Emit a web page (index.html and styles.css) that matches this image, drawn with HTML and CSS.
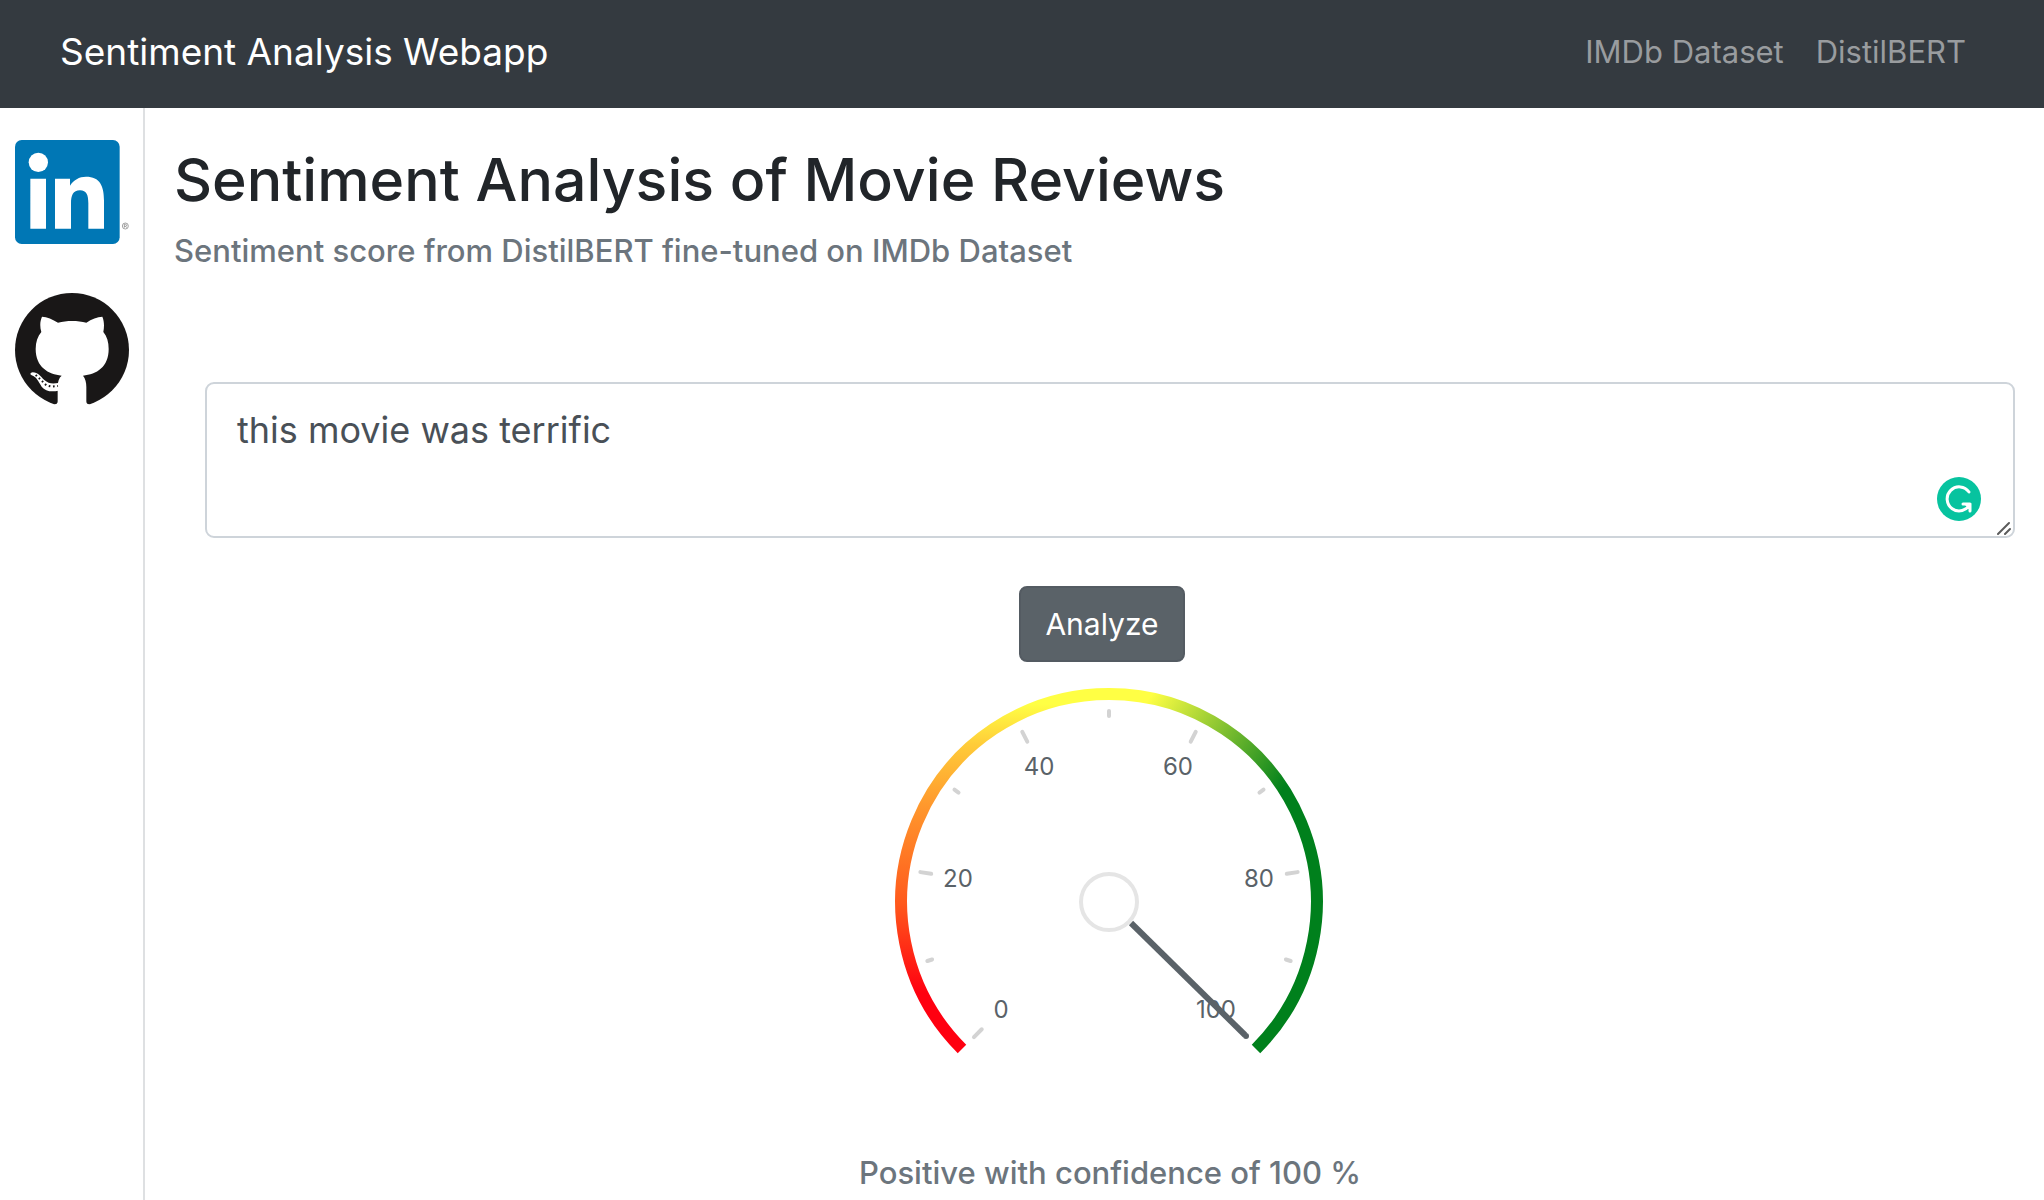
FILE: index.html
```html
<!DOCTYPE html>
<html lang="en">
<head>
<meta charset="utf-8">
<meta name="viewport" content="width=device-width, initial-scale=1">
<title>Sentiment Analysis Webapp</title>
<link rel="stylesheet" href="styles.css">
</head>
<body>
<header class="navbar">
  <a class="brand" href="#">Sentiment Analysis Webapp</a>
  <nav class="nav-links">
    <a class="nav-link" href="#imdb">IMDb Dataset</a>
    <a class="nav-link" href="#distilbert">DistilBERT</a>
  </nav>
</header>
<div class="layout">
  <aside class="sidebar">
    <a class="social" href="#linkedin" aria-label="LinkedIn">
      <svg class="social-icon" viewBox="45 60 342 312">
        <rect x="45" y="60" width="314" height="312" rx="20" fill="#0077b5"/>
        <circle cx="115" cy="127" r="29" fill="#fff"/>
        <path d="M91 176h47v150H91zM165 176H210V197C220 180 238 170 258 170C300 170 312 198 312 242V326H265V250C265 226 260 211 240 211C219 211 213 227 213 250V326H165Z" fill="#fff"/>
        <circle cx="376" cy="318" r="9" fill="none" stroke="#777" stroke-width="2"/>
        <path d="M373 323v-10h4q3 1 3 3t-3 3h-4m4 0l3 4" fill="none" stroke="#777" stroke-width="2"/>
      </svg>
    </a>
    <a class="social" href="#github" aria-label="GitHub">
      <svg class="social-icon" viewBox="45 518 342 342">
        <circle cx="216" cy="689" r="171" fill="#191717"/>
        <path d="M163 865V852Q173 853 173 843V800C173 784 177 772 185 766C145 762 107 740 107 686C107 665 113 648 124 635C119 618 120 602 126 589C141 589 158 597 174 607C200 600 233 600 259 607C275 596 292 589 307 589C313 602 313 620 310 635C321 648 326 665 326 686C326 740 290 762 249 766C256 775 259 785 259 800V843Q259 853 269 852V865Z" fill="#fff"/>
        <path d="M175 811C154 816 135 812 125 799C114 782 110 770 95 765C89 762 91 757 98 756C114 756 122 769 133 779C145 790 157 791 175 788Z" fill="#fff"/>
        <path d="M107 764L123 779L139 795L155 799L174 797" fill="none" stroke="#191717" stroke-width="6" stroke-dasharray="5 8"/>
      </svg>
    </a>
  </aside>
  <main class="content">
    <h1 class="title">Sentiment Analysis of Movie Reviews</h1>
    <h2 class="caption">Sentiment score from DistilBERT fine-tuned on IMDb Dataset</h2>
    <form class="review" onsubmit="return false">
      <div class="field">
        <textarea class="review-text" aria-label="Movie review" spellcheck="false">this movie was terrific</textarea>
        <svg class="grammar-badge" viewBox="0 0 44 44" aria-hidden="true">
          <circle cx="22" cy="22" r="22" fill="#07c39f"/>
          <path d="M32 15A12 12 0 1 0 33 27M33 27H26M33 27V34" fill="none" stroke="#fff" stroke-width="3" stroke-linecap="round"/>
          <path d="M27 27h7v7z" fill="#fff"/>
        </svg>
        <svg class="grip" viewBox="0 0 14 14" aria-hidden="true">
          <path d="M1 13L12 2M8 13L13 8" stroke="#5c5c5c" stroke-width="2" stroke-linecap="round"/>
        </svg>
      </div>
      <button class="analyze" type="submit">Analyze</button>
    </form>
    <section class="result">
      <svg class="gauge" viewBox="-219 -220 440 440" role="img" aria-label="Sentiment score gauge">
        <defs>
          <linearGradient id="rise" gradientUnits="userSpaceOnUse" x1="0" y1="91" x2="0" y2="-198">
            <stop offset="0" stop-color="#ff0010"/>
            <stop offset="0.310" stop-color="#ff591c"/>
            <stop offset="0.650" stop-color="#ff982d"/>
            <stop offset="0.860" stop-color="#ffcc39"/>
            <stop offset="1" stop-color="#ffff44"/>
          </linearGradient>
          <linearGradient id="fall" gradientUnits="userSpaceOnUse" x1="40" y1="-204" x2="174" y2="-113">
            <stop offset="0" stop-color="#ffff44"/>
            <stop offset="1" stop-color="#00801c"/>
          </linearGradient>
        </defs>
        <g fill="none" stroke-width="12">
          <path d="M-147 147A208 208 0 0 1 0 -208H1" stroke="url(#rise)"/>
          <path d="M0 -208A208 208 0 0 1 147 147" stroke="url(#fall)"/>
        </g>
        <g stroke="#d3d3d3" stroke-width="4" stroke-linecap="round">
          <path d="M0 -191V-180" transform="rotate(-135)"/>
          <path d="M0 -191V-186" transform="rotate(-108)"/>
          <path d="M0 -191V-180" transform="rotate(-81)"/>
          <path d="M0 -191V-186" transform="rotate(-54)"/>
          <path d="M0 -191V-180" transform="rotate(-27)"/>
          <path d="M0 -191V-186"/>
          <path d="M0 -191V-180" transform="rotate(27)"/>
          <path d="M0 -191V-186" transform="rotate(54)"/>
          <path d="M0 -191V-180" transform="rotate(81)"/>
          <path d="M0 -191V-186" transform="rotate(108)"/>
        </g>
        <g class="gauge-label">
          <text x="-108" y="116">0</text>
          <text x="-151" y="-15">20</text>
          <text x="-70" y="-127">40</text>
          <text x="69" y="-127">60</text>
          <text x="150" y="-15">80</text>
          <text x="107" y="116">100</text>
        </g>
        <path d="M22 21L136 133" stroke="#5a6268" stroke-width="6"/>
        <circle cx="137" cy="134" r="3" fill="#5a6268"/>
        <circle r="28" fill="#fff" stroke="#e5e5e5" stroke-width="4"/>
      </svg>
      <p class="verdict">Positive with confidence of 100 %</p>
    </section>
  </main>
</div>
</body>
</html>
```
FILE: styles.css
```css
* { box-sizing: border-box; }

body {
  margin: 0;
  min-height: 100vh;
  display: flex;
  flex-direction: column;
  background: #fff;
  color: #212529;
  font-family: Inter, "Liberation Sans", sans-serif;
  font-size: 31px;
  line-height: 48px;
}

.navbar {
  display: flex;
  align-items: center;
  justify-content: space-between;
  padding: 22px 78px 26px 60px;
  background: #343a40;
}

.brand {
  color: #fff;
  font-size: 37px;
  line-height: 60px;
  text-decoration: none;
}

.nav-links { display: flex; gap: 32px; }

.nav-link {
  color: #999c9f;
  text-decoration: none;
}

.layout { flex: 1; display: flex; }

.sidebar {
  flex: none;
  width: 145px;
  padding: 32px 14px 0 15px;
  border-right: 2px solid #dee0e2;
  display: flex;
  flex-direction: column;
  gap: 49px;
}

.social { display: block; }
.social-icon { display: block; width: 100%; }

.content {
  flex: 1;
  min-width: 0;
  padding: 34px 29px 0 29px;
}

.title {
  margin: 0 0 14px;
  font-size: 59px;
  font-weight: 500;
  line-height: 76px;
}

.caption {
  margin: 0;
  color: #6c757d;
  font-size: 31px;
  font-weight: 500;
  line-height: 38px;
}

.review {
  margin: 112px 0 0 31px;
  display: flex;
  flex-direction: column;
  align-items: center;
  gap: 48px;
}

.field { position: relative; width: 100%; }

.review-text {
  display: block;
  width: 100%;
  height: 156px;
  padding: 16px 30px;
  border: 2px solid #ced4da;
  border-radius: 9px;
  color: #495057;
  background: #fff;
  font: inherit;
  font-size: 36px;
  line-height: 60px;
  resize: none;
}

.grammar-badge {
  position: absolute;
  right: 34px;
  bottom: 17px;
  width: 44px;
}

.grip {
  position: absolute;
  right: 4px;
  bottom: 3px;
  width: 14px;
}

.analyze {
  margin-right: 16px;
  padding: 12px 24px;
  border: 2px solid #545b62;
  border-radius: 8px;
  background: #5a6268;
  color: #fff;
  font: inherit;
  font-size: 30px;
}

.result {
  margin: 20px 0 0 31px;
  display: flex;
  flex-direction: column;
  align-items: center;
}

.gauge { width: 440px; }

.gauge-label {
  fill: #5a6268;
  font-size: 24px;
  text-anchor: middle;
}

.verdict {
  margin: 27px 0 0;
  color: #6c757d;
  font-weight: 500;
}
```
